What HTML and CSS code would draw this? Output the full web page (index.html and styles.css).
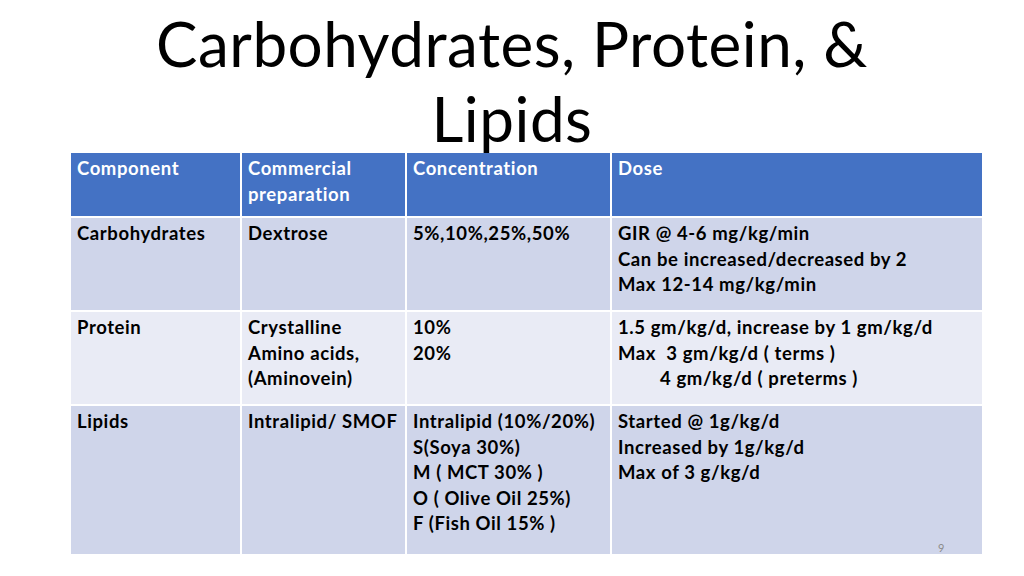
FILE: index.html
```html
<!DOCTYPE html>
<html>
<head>
<meta charset="utf-8">
<link rel="stylesheet" href="styles.css">
</head>
<body>
<div class="slide">
  <h1 class="title">Carbohydrates, Protein, &amp;<br>Lipids</h1>
  <table class="grid">
    <colgroup>
      <col class="c1"><col class="c2"><col class="c3"><col class="c4">
    </colgroup>
    <tr class="head">
      <td>Component</td>
      <td>Commercial<br>preparation</td>
      <td>Concentration</td>
      <td>Dose</td>
    </tr>
    <tr class="odd r1">
      <td>Carbohydrates</td>
      <td>Dextrose</td>
      <td>5%,10%,25%,50%</td>
      <td>GIR @ 4-6 mg/kg/min<br>Can be increased/decreased by 2<br>Max 12-14 mg/kg/min</td>
    </tr>
    <tr class="even r2">
      <td>Protein</td>
      <td>Crystalline<br>Amino acids,<br>(Aminovein)</td>
      <td>10%<br>20%</td>
      <td>1.5 gm/kg/d, increase by 1 gm/kg/d<br>Max&nbsp; 3 gm/kg/d ( terms )<br><span class="indent">4 gm/kg/d ( preterms )</span></td>
    </tr>
    <tr class="odd r3">
      <td>Lipids</td>
      <td>Intralipid/ SMOF</td>
      <td>Intralipid (10%/20%)<br>S(Soya 30%)<br>M ( MCT 30% )<br>O ( Olive Oil 25%)<br>F (Fish Oil 15% )</td>
      <td>Started @ 1g/kg/d<br>Increased by 1g/kg/d<br>Max of 3 g/kg/d</td>
    </tr>
  </table>
  <div class="pagenum">9</div>
</div>
</body>
</html>
```

FILE: styles.css
```css
html, body {
  margin: 0;
  padding: 0;
  background: #ffffff;
}

.slide {
  position: relative;
  width: 1024px;
  height: 576px;
  overflow: hidden;
  background: #ffffff;
  font-family: Lato, "Liberation Sans", sans-serif;
}

.title {
  box-sizing: border-box;
  height: 151px;
  margin: 0;
  padding-top: 6px;
  font-family: Lato, "Liberation Sans", sans-serif;
  font-weight: 400;
  font-size: 62px;
  line-height: 75px;
  letter-spacing: 0.5px;
  text-align: center;
  color: #000000;
}

.grid {
  margin-left: 69px;
  width: 913px;
  border-collapse: collapse;
  table-layout: fixed;
  font-size: 18.5px;
  font-weight: 700;
  line-height: 25.6px;
  letter-spacing: 0.6px;
  color: #000000;
}

.c1 { width: 171px; }
.c2 { width: 165px; }
.c3 { width: 205px; }
.c4 { width: 372px; }

.grid td {
  border: 2px solid #ffffff;
  padding: 3px 6px 0 6px;
  vertical-align: top;
  white-space: nowrap;
  overflow: visible;
}

.head td {
  background: #4472c4;
  color: #ffffff;
  height: 60px;
}

.odd td { background: #cfd5ea; }
.even td { background: #e9ebf5; }

.r1 td, .r2 td { height: 89px; }
.r3 td { height: 145px; }

.indent { padding-left: 42px; }

.pagenum {
  position: absolute;
  left: 938px;
  top: 541px;
  font-size: 11px;
  color: #8b8b8b;
}
```
